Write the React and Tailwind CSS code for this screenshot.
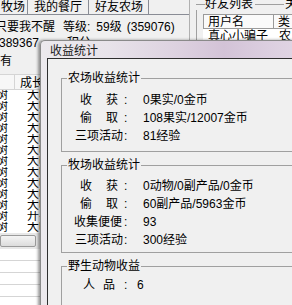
export default function App() {
  const font = "[font-family:'Liberation_Sans','Noto_Sans_CJK_SC',sans-serif]";
  const listRows = ["大叶子", "大叶子", "大叶子", "大叶子", "大叶子", "大叶子", "大叶子", "大叶子", "大叶子", "大叶子", "大叶子", "开花", "大叶子"];
  return (
    <div className={`relative w-[292px] h-[305px] overflow-hidden bg-[#f0f0f0] text-[12px] leading-none text-black ${font}`}>
      {/* Background application */}
      <div className="flex h-full">
        <div className="w-[190px] shrink-0 flex flex-col border-r border-[#b0b0b0]">
          <div className="h-[15px] flex border-b border-[#898c95] leading-[15px]">
            <div className="w-[28px] shrink-0 border-r border-[#898c95] pl-[1px]">牧场</div>
            <div className="w-[61px] shrink-0 border-r border-[#898c95] pl-[6px]">我的餐厅</div>
            <div className="w-[60px] shrink-0 border-r border-[#898c95] pl-[6px]">好友农场</div>
          </div>
          <div className="mt-[5px] h-[14px] leading-[14px] flex whitespace-nowrap">
            <span className="ml-[-5px]">只要我不醒</span>
            <span className="ml-[8px]">等级:</span>
            <span className="ml-[6px]">59级</span>
            <span className="ml-[5px]">(359076)</span>
          </div>
          <div className="mt-[2px] h-[14px] leading-[14px] flex whitespace-nowrap">
            <span className="ml-[-1px]">389367</span>
            <span className="ml-[28px]">积分</span>
          </div>
          <div className="mt-[4px] h-[14px] leading-[14px]">有</div>
          <div className="mt-[6px] flex flex-col bg-white">
            <div className="h-[16px] flex leading-[16px] border-y border-[#d5d5d5] bg-[#f7f7f7]">
              <div className="w-[15px] shrink-0 border-r border-[#d5d5d5]"></div>
              <div className="w-[60px] shrink-0 border-r border-[#d5d5d5] pl-[5px]">成长</div>
            </div>
            {listRows.map((t, i) => (
              <div key={i} className="h-[11px] flex leading-[11px] overflow-hidden">
                <div className="w-[15px] shrink-0 overflow-hidden whitespace-nowrap">
                  <span className="ml-[-4px]">树</span>
                </div>
                <div className="pl-[12px] whitespace-nowrap">{t}</div>
              </div>
            ))}
            <div className="h-[16px] bg-[#e8e8e8] flex items-center">
              <div className="w-[36px] h-[12px] rounded-[2px] border border-[#9a9a9a] bg-[linear-gradient(#f4f4f4,#dcdcdc)]"></div>
            </div>
            <div className="flex flex-col">
              {[0, 1, 2, 3, 4].map((i) => (
                <div key={i} className="h-[12px] border-b border-[#d5d5d5]"></div>
              ))}
            </div>
          </div>
        </div>
        <div className="ml-[6px] flex-1 flex flex-col">
          <div className="flex items-center h-[12px] mt-[-2px] whitespace-nowrap">
            <div className="w-[9px] h-px bg-[#a0a0a0]"></div>
            <span>好友列表</span>
            <div className="w-[29px] h-px bg-[#a0a0a0] ml-[2px]"></div>
            <span className="ml-[1px]">关</span>
          </div>
          <div className="flex-1 border-l border-[#a0a0a0] pl-[6px] pt-[4px]">
            <div className="bg-white">
              <div className="h-[15px] flex leading-[15px] border-y border-[#9a9a9a] bg-[#fafafa]">
                <div className="w-[71px] shrink-0 border-x border-[#9a9a9a] pl-[4px]">用户名</div>
                <div className="pl-[4px]">类</div>
              </div>
              <div className="h-[14px] flex leading-[14px] whitespace-nowrap">
                <div className="w-[72px] shrink-0 pl-[5px]">真心小骗子</div>
                <div className="pl-[4px]">农</div>
              </div>
            </div>
          </div>
        </div>
      </div>

      {/* Dialog window */}
      <div className="absolute left-[40px] top-[40px] w-[270px] h-[280px] rounded-tl-[5px] border-l border-t border-[#8a8a8a] bg-[linear-gradient(90deg,#ece9ed_0%,#e8e3ea_25%,#ddd2e0_50%,#d3c3d7_68%,#dccfe0_85%,#e2d8e5_100%)] shadow-[-2px_0_3px_rgba(0,0,0,0.4)] flex flex-col">
        <div className="h-[24px] pl-[9px] flex items-center pt-[2px] text-[#1a1a1a]">收益统计</div>
        <div className="flex-1 ml-[6px] border-l border-t border-[#2e2e2e] bg-[#f0f0f0] pl-[13px] pt-[13px] flex flex-col">
          <fieldset className="w-[260px] border border-[#a0a0a0] pt-[7px] pb-[6px]">
            <legend className="ml-[5px] px-[1px] leading-[12px]">农场收益统计</legend>
            <div className="flex h-[18px] items-center leading-[18px]">
              <div className="w-[81px] shrink-0 flex"><span className="ml-[18px]">收</span><span className="ml-[14px]">获</span><span className="ml-[6px]">:</span></div>
              <span>0果实/0金币</span>
            </div>
            <div className="flex h-[18px] items-center leading-[18px]">
              <div className="w-[81px] shrink-0 flex"><span className="ml-[18px]">偷</span><span className="ml-[14px]">取</span><span className="ml-[6px]">:</span></div>
              <span>108果实/12007金币</span>
            </div>
            <div className="flex h-[18px] items-center leading-[18px]">
              <div className="w-[81px] shrink-0 flex"><span className="ml-[13px]">三项活动</span><span className="ml-[1px]">:</span></div>
              <span>81经验</span>
            </div>
          </fieldset>
          <fieldset className="mt-[7px] w-[260px] border border-[#a0a0a0] pt-[6px] pb-[3px]">
            <legend className="ml-[5px] px-[1px] leading-[12px]">牧场收益统计</legend>
            <div className="flex h-[18px] items-center leading-[18px]">
              <div className="w-[81px] shrink-0 flex"><span className="ml-[18px]">收</span><span className="ml-[14px]">获</span><span className="ml-[6px]">:</span></div>
              <span>0动物/0副产品/0金币</span>
            </div>
            <div className="flex h-[18px] items-center leading-[18px]">
              <div className="w-[81px] shrink-0 flex"><span className="ml-[18px]">偷</span><span className="ml-[14px]">取</span><span className="ml-[6px]">:</span></div>
              <span>60副产品/5963金币</span>
            </div>
            <div className="flex h-[18px] items-center leading-[18px]">
              <div className="w-[81px] shrink-0 flex"><span className="ml-[12px]">收集便便</span><span className="ml-[2px]">:</span></div>
              <span>93</span>
            </div>
            <div className="flex h-[18px] items-center leading-[18px]">
              <div className="w-[81px] shrink-0 flex"><span className="ml-[13px]">三项活动</span><span className="ml-[1px]">:</span></div>
              <span>300经验</span>
            </div>
          </fieldset>
          <fieldset className="mt-[7px] w-[260px] h-[60px] border border-[#a0a0a0] pt-[4px]">
            <legend className="ml-[5px] px-[1px] leading-[12px]">野生动物收益</legend>
            <div className="flex h-[18px] items-center leading-[18px]">
              <div className="w-[75px] shrink-0 flex"><span className="ml-[21px]">人</span><span className="ml-[8px]">品</span><span className="ml-[9px]">:</span></div>
              <span>6</span>
            </div>
          </fieldset>
        </div>
      </div>
    </div>
  );
}
